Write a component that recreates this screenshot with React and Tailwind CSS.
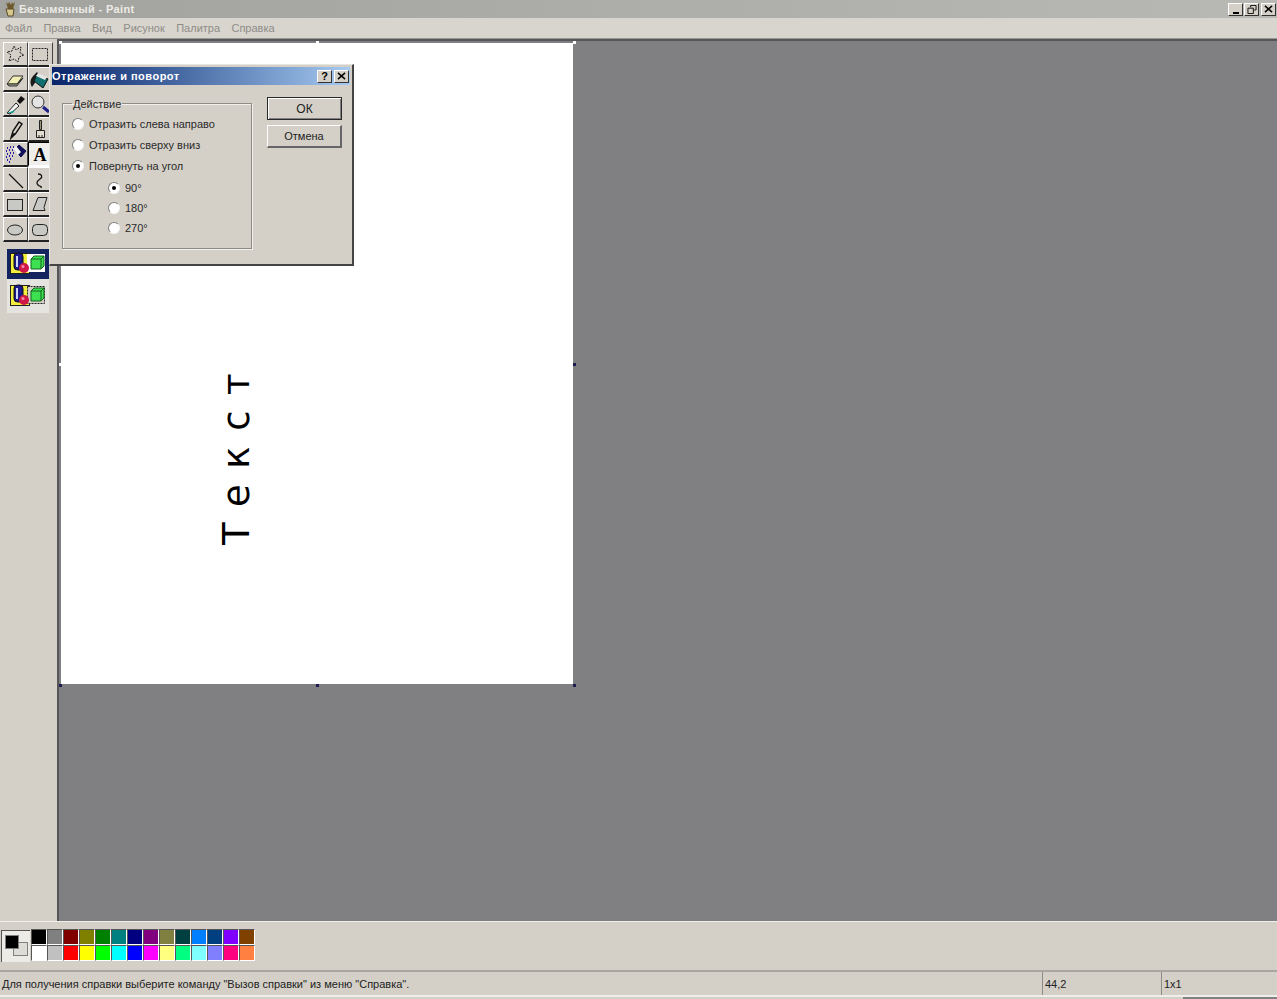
const ui = { fontFamily: '"Liberation Sans", Arial, sans-serif' };

const topColors = ['#000000', '#808080', '#800000', '#808000', '#008000', '#008080', '#000080', '#800080', '#808040', '#004040', '#0080ff', '#004080', '#8000ff', '#804000'];
const bottomColors = ['#ffffff', '#c0c0c0', '#ff0000', '#ffff00', '#00ff00', '#00ffff', '#0000ff', '#ff00ff', '#ffff80', '#00ff80', '#80ffff', '#8080ff', '#ff0080', '#ff8040'];

const tools = [
  <path d="M10 3l2 4 5-3-1 6 4 2-5 2-1 5-4-3-5 2 2-6-4-3 5-1z" fill="none" stroke="#222" strokeDasharray="2 1" />,
  <rect x="3.5" y="5.5" width="15" height="12" fill="none" stroke="#222" strokeDasharray="2 1" />,
  <>
    <path d="M3 16l6-8h10l-6 8z" fill="#f2efb4" stroke="#333" />
    <path d="M3 16l2 2h8l6-8-6 6z" fill="#a8a690" stroke="#333" />
  </>,
  <>
    <path d="M3 19c-3-5-1-9 2-12l3-3 3 4-3 4z" fill="#1b1b1b" />
    <path d="M8 6l11 5-5 9-9-7z" fill="#0f6f6f" stroke="#111" />
    <path d="M9 5l9 4-2 3-9-4z" fill="#e6e6e6" />
  </>,
  <>
    <path d="M3 20l9-10 3 3-9 8z" fill="#f4f4f4" stroke="#222" />
    <path d="M13 8l4-5 4 3-5 5z" fill="#111" />
    <path d="M3 20l8-3-2 3z" fill="#18a090" />
  </>,
  <>
    <circle cx="9" cy="9" r="6" fill="#e4e4e4" stroke="#333" />
    <path d="M14 14l6 5" stroke="#20208c" strokeWidth="3" />
  </>,
  <>
    <path d="M7 20l2-7 6-9 3 2-6 9z" fill="#d4d0c8" stroke="#111" strokeWidth="1.4" />
    <path d="M7 20l2-5 3 1z" fill="#111" />
  </>,
  <>
    <path d="M10.5 2.5h2v9h-2z" fill="#9a9670" stroke="#222" />
    <path d="M7.5 12.5h8v7h-8z" fill="#e2dfd0" stroke="#222" />
    <path d="M10 17v3M13 17v3" stroke="#222" />
  </>,
  <>
    <path d="M10 7l5-5 7 6-5 6z" fill="#10105a" stroke="#10105a" />
    <path d="M9 6l3-3 5 6-3 3z" fill="#f4f4f4" />
    <path d="M3 5h1M6 4h1M9 4h1M2 8h1M5 7h1M8 7h1M3 11h1M6 10h1M9 10h1M2 14h1M5 13h1M8 13h1M3 17h1M6 16h1M5 19h1" stroke="#2c1aa8" strokeWidth="2" />
  </>,
  <text x="11" y="18" textAnchor="middle" fontSize="18" fontWeight="700" fontFamily='"Liberation Serif", serif' fill="#000">A</text>,
  <path d="M5 6l14 14" stroke="#111" strokeWidth="1.3" />,
  <path d="M9 6c4 0 5 3 2 5s-4 4-2 6 4 1 3 3" fill="none" stroke="#111" strokeWidth="1.3" />,
  <rect x="3.5" y="6.5" width="15" height="11" fill="#c8c8c4" stroke="#222" />,
  <path d="M9 4.5h9l-3 10 1 3H4z" fill="#c8c8c4" stroke="#222" />,
  <ellipse cx="11" cy="12" rx="7.5" ry="5" fill="#c8c8c4" stroke="#222" />,
  <rect x="3.5" y="6.5" width="15" height="11" rx="4" fill="#c8c8c4" stroke="#222" />,
];

function ToolButton({ icon, active }) {
  return (
    <div
      className={`w-[25px] h-[25px] border-t border-l border-b-2 border-r flex items-center justify-center ${
        active
          ? 'border-t-black border-l-black border-b-white border-r-white bg-[#f0eeea]'
          : 'border-t-white border-l-white border-b-[#222222] border-r-[#444444] bg-[#d4d0c8]'
      }`}
    >
      <svg width="23" height="23" viewBox="0 0 23 23" className="shrink-0">{icon}</svg>
    </div>
  );
}

function OptionIcon({ dashed }) {
  return (
    <svg width="40" height="28" viewBox="0 0 40 28">
      <rect x="2.5" y="3.5" width="19" height="20" fill="#f2f03c" stroke="#222" />
      {dashed ? (
        <rect x="19.5" y="4.5" width="17" height="17" fill="#d4d0c8" stroke="#222" strokeDasharray="2 1" />
      ) : (
        <rect x="19" y="4" width="18" height="18" fill="#ffffff" />
      )}
      <rect x="6" y="3" width="9" height="17" rx="3.5" fill="#1a1a8c" stroke="#111" />
      <rect x="8" y="6" width="2" height="11" fill="#cfd8f4" />
      <circle cx="16" cy="18" r="5" fill="#d01848" />
      <circle cx="15" cy="16.5" r="1.5" fill="#f08ca8" />
      <path d="M23 19V9l3-3h10v10l-3 3z" fill="#3ce050" stroke="#14641e" />
      <path d="M23 9h10l3-3M33 9v10" fill="none" stroke="#14641e" />
    </svg>
  );
}

function Radio({ checked }) {
  return (
    <span className="w-[12px] h-[12px] rounded-full bg-white border border-[#808080] border-r-[#f4f4f4] border-b-[#f4f4f4] flex items-center justify-center shrink-0">
      {checked && <span className="w-[4px] h-[4px] rounded-full bg-black" />}
    </span>
  );
}

function RadioRow({ label, checked, className }) {
  return (
    <div className={`flex items-center text-[11px] leading-[14px] text-[#2a2a2a] ${className}`}>
      <Radio checked={checked} />
      <span className="ml-[5px]">{label}</span>
    </div>
  );
}

function DialogButton({ label, isDefault }) {
  return (
    <div
      className={`w-[75px] h-[23px] flex items-center justify-center text-[#222222] bg-[#d4d0c8] ${
        isDefault
          ? 'text-[12px] border border-[#2a2a2a] shadow-[inset_1px_1px_0_#ffffff,inset_-1px_-1px_0_#808080]'
          : 'text-[11px] border border-t-white border-l-white border-b-2 border-r-2 border-b-[#666666] border-r-[#666666]'
      }`}
    >
      {label}
    </div>
  );
}

function WinButton({ children, className = '' }) {
  return (
    <div className={`w-[15px] h-[13px] bg-[#d4d0c8] border border-t-white border-l-white border-b-[#333333] border-r-[#333333] flex items-center justify-center ${className}`}>
      {children}
    </div>
  );
}

function Handle({ className }) {
  return <div className={`absolute w-[3px] h-[3px] ${className}`} />;
}

function Dialog() {
  return (
    <div className="absolute left-[49px] top-[64px] w-[305px] h-[202px] bg-[#d4d0c8] border border-t-[#e8e6e0] border-l-[#e8e6e0] border-b-2 border-r-2 border-b-[#444444] border-r-[#444444] p-[2px] z-10">
      <div className="h-[18px] flex items-center justify-between pr-[1px] bg-gradient-to-r from-[#0a246a] to-[#a6caf0]">
        <span className="text-[11px] font-bold text-white tracking-[0.5px]">Отражение и поворот</span>
        <div className="flex">
          <WinButton className="mr-[2px]"><span className="text-[11px] leading-none font-bold text-black">?</span></WinButton>
          <WinButton>
            <svg width="9" height="8" viewBox="0 0 10 9"><path d="M1 1l8 7M9 1l-8 7" stroke="#000" strokeWidth="1.6" /></svg>
          </WinButton>
        </div>
      </div>
      <div className="flex pl-[10px] pt-[10px]">
        <fieldset className="w-[190px] h-[154px] border border-[#8e8c86] shadow-[inset_1px_1px_0_#f2f0ea,1px_1px_0_#f2f0ea] px-[9px]">
          <legend className="px-[1px] pt-[2px] text-[11px] leading-[14px] text-[#2a2a2a]">Действие</legend>
          <RadioRow label="Отразить слева направо" className="mt-[6px]" />
          <RadioRow label="Отразить сверху вниз" className="mt-[7px]" />
          <RadioRow label="Повернуть на угол" checked className="mt-[7px]" />
          <RadioRow label="90°" checked className="mt-[8px] ml-[36px]" />
          <RadioRow label="180°" className="mt-[6px] ml-[36px]" />
          <RadioRow label="270°" className="mt-[6px] ml-[36px]" />
        </fieldset>
        <div className="ml-[15px] mt-[2px] flex flex-col gap-[5px]">
          <DialogButton label="ОК" isDefault />
          <DialogButton label="Отмена" />
        </div>
      </div>
    </div>
  );
}

export default function App() {
  return (
    <div style={ui} className="relative w-[1277px] h-[999px] overflow-hidden flex flex-col bg-[#d4d0c8]">
      {/* заголовок окна */}
      <div className="h-[18px] shrink-0 flex items-center justify-between bg-gradient-to-r from-[#a2a29e] to-[#b8b8b4] pl-[2px] pr-[1px]">
        <div className="flex items-center">
          <svg width="16" height="16" viewBox="0 0 16 16">
            <path d="M4 1l2 7h5l2-7-2 2-1-2-1 3-2-3-1 2z" fill="#6e5a2e" />
            <path d="M4 8h8l-1 7H6z" fill="#d8c890" stroke="#5a4a28" />
          </svg>
          <span className="ml-[1px] text-[11px] font-bold text-[#ecebe6] tracking-[0.33px]">Безымянный - Paint</span>
        </div>
        <div className="flex">
          <WinButton className="items-end mr-[1px]">
            <div className="w-[6px] h-[2px] bg-black mb-[1px]" />
          </WinButton>
          <WinButton className="mr-[2px]">
            <svg width="10" height="9" viewBox="0 0 10 10">
              <path d="M3.5 2.5V.5h6v5h-2M.5 3.5h6v6h-6z" fill="none" stroke="#000" />
            </svg>
          </WinButton>
          <WinButton>
            <svg width="9" height="8" viewBox="0 0 10 9"><path d="M1 1l8 7M9 1l-8 7" stroke="#000" strokeWidth="1.6" /></svg>
          </WinButton>
        </div>
      </div>

      {/* меню */}
      <div className="h-[20px] shrink-0 flex items-center gap-[11.4px] pl-[5px] text-[11px] text-[#8e8c86] bg-[#d8d5ce]">
        <span>Файл</span>
        <span>Правка</span>
        <span>Вид</span>
        <span>Рисунок</span>
        <span>Палитра</span>
        <span>Справка</span>
      </div>

      {/* панель инструментов и холст */}
      <div className="flex-1 min-h-0 flex border-t border-[#9a9892]">
        <div className="w-[57px] shrink-0 pl-[3px] pt-[3px] bg-[#d4d0c8]">
          <div className="grid grid-cols-[25px_25px]">
            {tools.map((icon, i) => (
              <ToolButton key={i} icon={icon} active={i === 9} />
            ))}
          </div>
          <div className="ml-[4px] mt-[7px] w-[42px] h-[64px] bg-[#e6e4de] flex flex-col items-center">
            <div className="w-full h-[30px] bg-[#14245e] flex items-center justify-center">
              <OptionIcon />
            </div>
            <div className="h-[33px] flex items-center">
              <OptionIcon dashed />
            </div>
          </div>
        </div>
        <div className="flex-1 bg-[#808082] border-l-2 border-t-2 border-l-[#55555a] border-t-[#55555a] pl-[2px] pt-[2px]">
          <div className="relative w-[512px] h-[641px] bg-white">
            <span
              className="absolute left-[82px] top-[390px] text-[37px] leading-none text-black tracking-[15.5px] -rotate-90 origin-center whitespace-nowrap"
              style={{ fontFamily: '"DejaVu Sans", Verdana, sans-serif' }}
            >
              Текст
            </span>
            <Handle className="-left-[2px] -top-[2px] bg-white" />
            <Handle className="left-[255px] -top-[2px] bg-white" />
            <Handle className="-right-[3px] -top-[2px] bg-white" />
            <Handle className="-left-[2px] top-[320px] bg-white" />
            <Handle className="-right-[3px] top-[320px] bg-[#1c1c50]" />
            <Handle className="-left-[2px] -bottom-[3px] bg-[#1c1c50]" />
            <Handle className="left-[255px] -bottom-[3px] bg-[#1c1c50]" />
            <Handle className="-right-[3px] -bottom-[3px] bg-[#1c1c50]" />
          </div>
        </div>
      </div>

      {/* палитра */}
      <div className="h-[49px] shrink-0 flex items-start pl-[1px] pt-[7px] border-t border-[#f0eeea] bg-[#d4d0c8]">
        <div className="relative w-[29px] h-[32px] mt-[1px] bg-[#ecebe6] border-t border-l border-[#555555]">
          <div className="absolute left-[11px] top-[11px] w-[15px] h-[14px] bg-[#dedcd6] border border-[#808080]" />
          <div className="absolute left-[3px] top-[4px] w-[14px] h-[14px] bg-black border border-[#808080]" />
        </div>
        <div className="ml-[1px] grid grid-cols-[repeat(14,16px)] grid-rows-[16px_16px]">
          {[...topColors, ...bottomColors].map((c, i) => (
            <div key={i} className="border border-t-[#555555] border-l-[#555555] border-b-white border-r-white" style={{ backgroundColor: c }} />
          ))}
        </div>
      </div>

      {/* строка состояния */}
      <div className="h-[25px] shrink-0 flex gap-[2px] border-t-2 border-[#a8a6a0] bg-[#d4d0c8] text-[11px] text-[#222222]">
        <div className="w-[1040px] pl-[2px] pt-[1px] flex items-center">Для получения справки выберите команду "Вызов справки" из меню "Справка".</div>
        <div className="w-[117px] pl-[2px] pt-[1px] flex items-center border-l border-[#8e8c86]">44,2</div>
        <div className="flex-1 pl-[2px] pt-[1px] flex items-center border-l border-[#8e8c86]">1x1</div>
      </div>
      <div className="h-[4px] shrink-0 flex border-t-2 border-[#f0eeea]">
        <div className="w-[1183px] bg-[#d4d0c8]" />
        <div className="flex-1 bg-[#808082]" />
      </div>

      <Dialog />
    </div>
  );
}
